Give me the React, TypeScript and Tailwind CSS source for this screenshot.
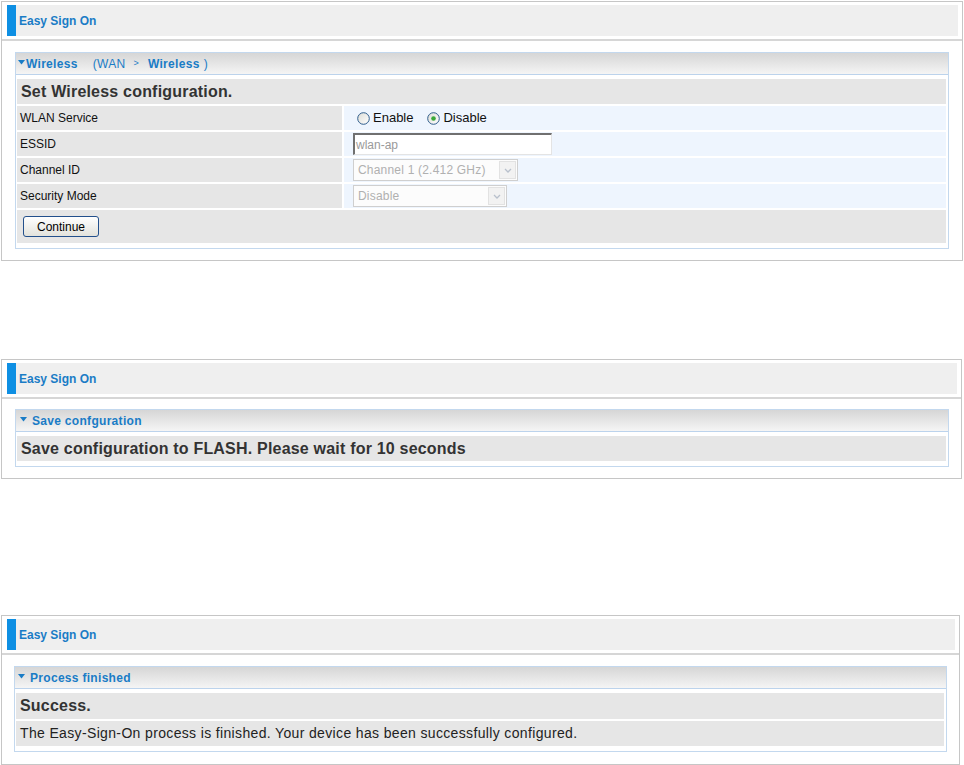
import React from "react";

const FONT = { fontFamily: '"Liberation Sans", Arial, sans-serif' };

function PanelHeader() {
  return (
    <div className="pt-[3px] pl-[5px] pr-[4px] pb-[3px]">
      <div className="flex h-[31px] items-stretch bg-[#efefef]">
        <div className="w-[9px] bg-[#0e8fe3]" />
        <div className="flex items-center pl-[3px] text-[12px] font-bold text-[#1a7cc6]">
          Easy Sign On
        </div>
      </div>
    </div>
  );
}

function Tri() {
  return (
    <svg width="7" height="5" viewBox="0 0 7 5" className="mt-[-3px]">
      <polygon points="0,0 7,0 3.5,4.5" fill="#1a7cc6" />
    </svg>
  );
}

function Radio({ checked }: { checked?: boolean }) {
  return (
    <svg width="13" height="13" viewBox="0 0 13 13">
      <defs>
        <linearGradient id={checked ? "rg1" : "rg0"} x1="0" y1="0" x2="1" y2="1">
          <stop offset="0" stopColor="#dcdcd6" />
          <stop offset="1" stopColor="#ffffff" />
        </linearGradient>
      </defs>
      <circle cx="6.5" cy="6.5" r="5.8" fill={`url(#${checked ? "rg1" : "rg0"})`} stroke="#2f5d8c" strokeWidth="1" />
      {checked && <circle cx="6.5" cy="6.5" r="2.3" fill="#3aa83a" />}
    </svg>
  );
}

function Chevron() {
  return (
    <svg width="8" height="5" viewBox="0 0 8 5">
      <polyline points="1,1 4,4 7,1" fill="none" stroke="#b8c0cc" strokeWidth="1.3" />
    </svg>
  );
}

function FakeSelect({ width, text }: { width: string; text: string }) {
  return (
    <div className={`flex h-[22px] ${width} items-center border border-[#cfcfcf] bg-[#fcfcfc]`}>
      <div className="flex-1 pl-[4px] text-[12px] tracking-[0.2px] text-[#b0b0b0]">{text}</div>
      <div className="mr-[1px] flex h-[18px] w-[17px] items-center justify-center border border-[#e2e2e2] bg-[#f2f2f2]">
        <Chevron />
      </div>
    </div>
  );
}

function Row({ label, children }: { label: string; children: React.ReactNode }) {
  return (
    <div className="flex h-[24px] gap-[2px]">
      <div className="flex w-[325px] items-center bg-[#e6e6e6] pl-[3px] text-[12px] text-[#111]">{label}</div>
      <div className="flex flex-1 items-center bg-[#eef5fe] pl-[9px]">{children}</div>
    </div>
  );
}

function Section({ title, children }: { title: React.ReactNode; children: React.ReactNode }) {
  return (
    <div className="border border-[#c3d8ee]">
      <div className="flex h-[22px] items-center gap-[1px] border-b border-[#bcd3ec] bg-linear-to-b from-[#d6d6d6] to-[#f5f5f5] pl-[2px] text-[12px] tracking-[0.3px] text-[#1a7cc6]">
        {title}
      </div>
      <div className="flex flex-col gap-[2px] pt-[4px] pl-[1px] pr-[2px] pb-[5px]">{children}</div>
    </div>
  );
}

export default function App() {
  return (
    <div className="h-[765px] w-[964px] bg-white" style={FONT}>
      {/* Panel 1 */}
      <div className="ml-[1px] mt-[1px] w-[962px] border border-[#c6c6c6]">
        <PanelHeader />
        <div className="border-t-2 border-[#d6d6d6] px-[13px] pt-[11px] pb-[11px]">
          <Section
            title={
              <>
                <Tri />
                <span className="font-bold">Wireless</span>
                <span className="ml-[14px]">(WAN</span>
                <span className="ml-[7px] text-[9px]">&gt;</span>
                <span className="ml-[8px] font-bold">Wireless</span>
                <span className="ml-[3px]">)</span>
              </>
            }
          >
            <div className="flex h-[25px] items-center bg-[#e6e6e6] pl-[4px] text-[16px] font-bold tracking-[0.2px] text-[#333]">
              Set Wireless configuration.
            </div>
            <Row label="WLAN Service">
              <div className="flex items-center text-[13px] text-[#111]">
                <div className="ml-[4px] flex items-center">
                  <Radio />
                </div>
                <span className="ml-[3px]">Enable</span>
                <div className="ml-[14px] flex items-center">
                  <Radio checked />
                </div>
                <span className="ml-[3px]">Disable</span>
              </div>
            </Row>
            <Row label="ESSID">
              <div className="flex h-[22px] w-[199px] items-center border-t-2 border-l-2 border-r border-b border-t-[#707070] border-l-[#707070] border-r-[#e4e4e4] border-b-[#e4e4e4] bg-white pl-[1px] text-[12px] text-[#9a9a9a]">
                wlan-ap
              </div>
            </Row>
            <Row label="Channel ID">
              <FakeSelect width="w-[165px]" text="Channel 1 (2.412 GHz)" />
            </Row>
            <Row label="Security Mode">
              <FakeSelect width="w-[154px]" text="Disable" />
            </Row>
            <div className="flex h-[33px] items-center bg-[#e6e6e6] pl-[6px]">
              <button className="h-[21px] w-[76px] rounded-[3px] border border-[#23508c] bg-linear-to-b from-[#ffffff] to-[#e2e2dc] text-[12px] text-black">
                Continue
              </button>
            </div>
          </Section>
        </div>
      </div>

      {/* Panel 2 */}
      <div className="ml-[1px] mt-[98px] w-[961px] border border-[#c6c6c6]">
        <PanelHeader />
        <div className="border-t-2 border-[#d6d6d6] pl-[13px] pr-[12px] pt-[10px] pb-[11px]">
          <Section
            title={
              <>
                <span className="ml-[2px]">
                  <Tri />
                </span>
                <span className="ml-[4px] font-bold">Save confguration</span>
              </>
            }
          >
            <div className="flex h-[25px] items-center bg-[#e6e6e6] pl-[4px] text-[16px] font-bold tracking-[0.2px] text-[#333]">
              Save configuration to FLASH. Please wait for 10 seconds
            </div>
          </Section>
        </div>
      </div>

      {/* Panel 3 */}
      <div className="ml-[1px] mt-[136px] w-[959px] border border-[#c6c6c6]">
        <PanelHeader />
        <div className="border-t-2 border-[#d6d6d6] pl-[12px] pr-[12px] pt-[11px] pb-[12px]">
          <Section
            title={
              <>
                <span className="ml-[1px]">
                  <Tri />
                </span>
                <span className="ml-[4px] font-bold">Process finished</span>
              </>
            }
          >
            <div className="flex h-[26px] items-center bg-[#e6e6e6] pl-[4px] text-[16px] font-bold tracking-[0.2px] text-[#333]">
              Success.
            </div>
            <div className="flex h-[25px] items-center bg-[#e6e6e6] pl-[4px] text-[14px] tracking-[0.35px] text-[#222]">
              The Easy-Sign-On process is finished. Your device has been successfully configured.
            </div>
          </Section>
        </div>
      </div>
    </div>
  );
}
